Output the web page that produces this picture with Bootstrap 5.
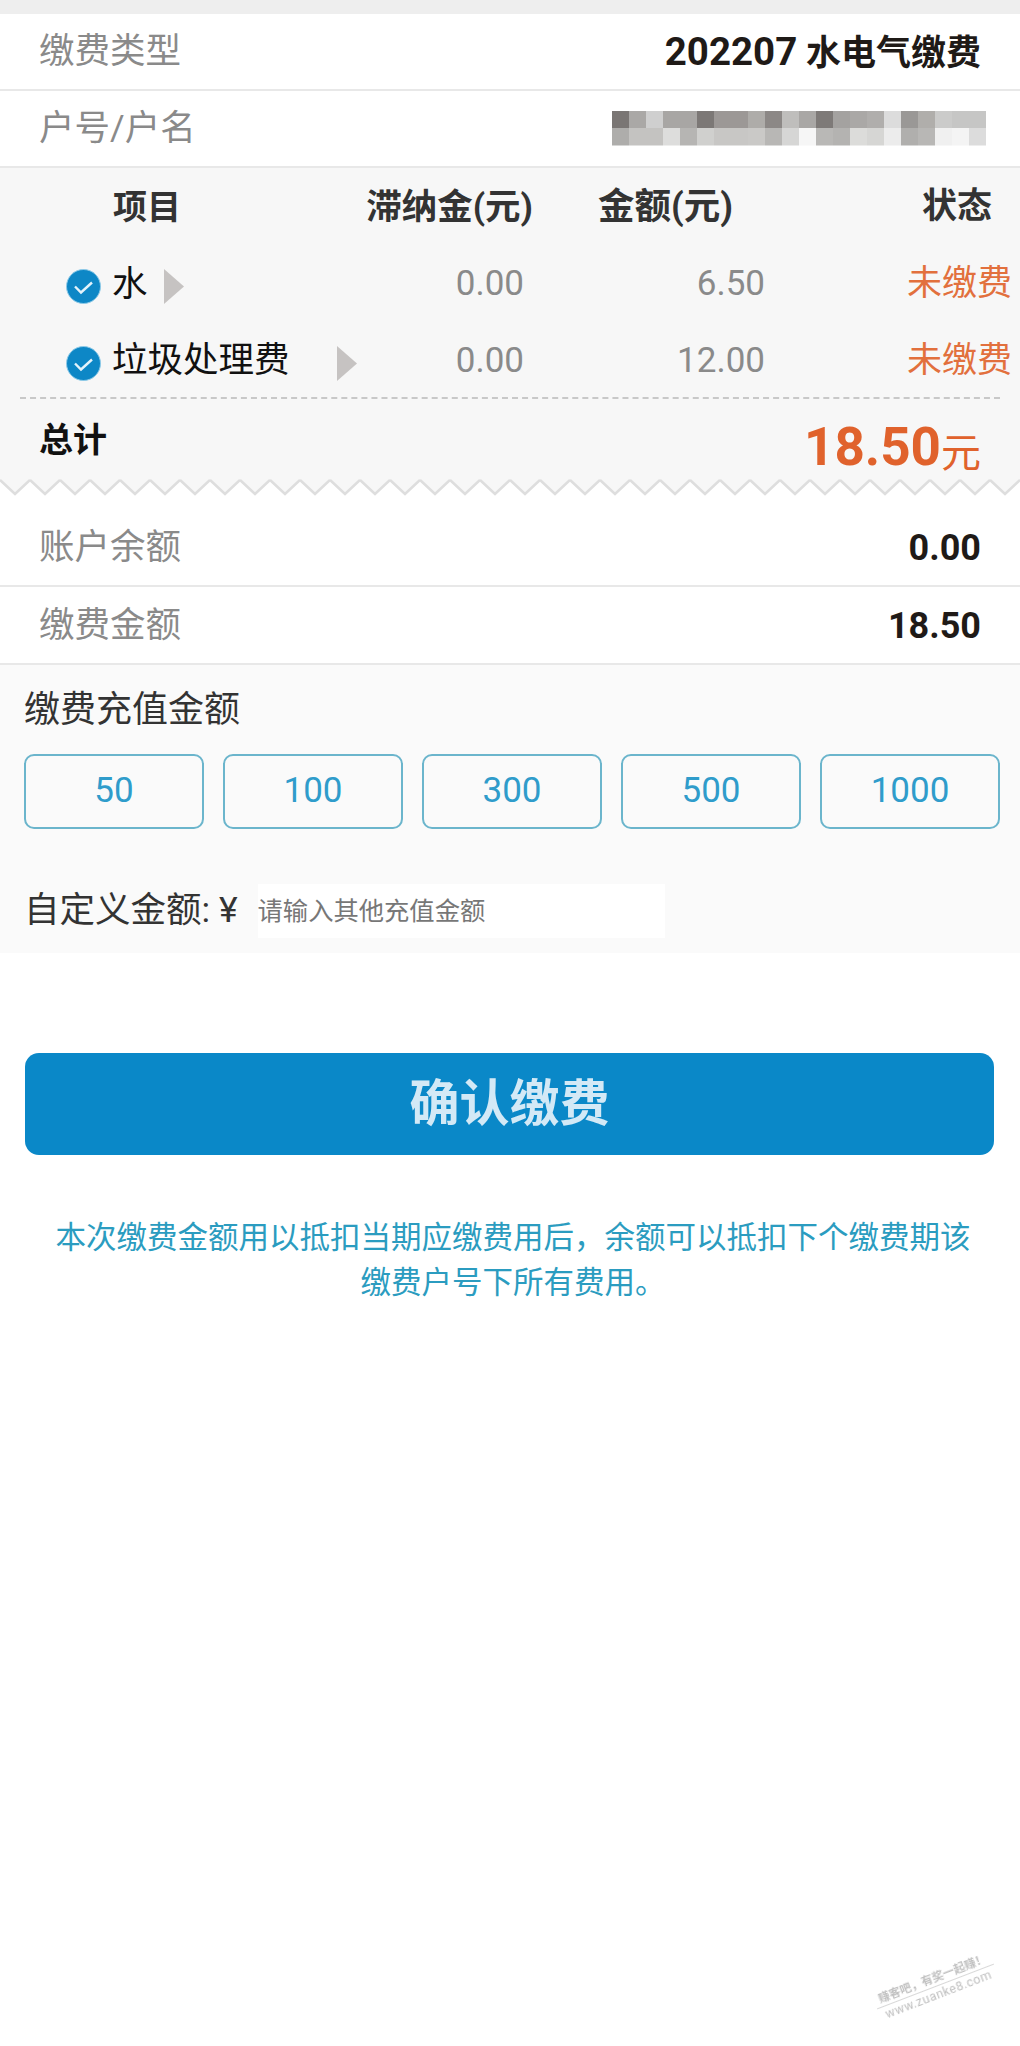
<!DOCTYPE html>
<html lang="zh-CN">
<head>
  <meta charset="UTF-8">
  <meta name="viewport" content="width=device-width, initial-scale=1.0">
  <title>缴费</title>
  <link href="https://cdn.jsdelivr.net/npm/bootstrap@5.3.0/dist/css/bootstrap.min.css" rel="stylesheet">
  <style>
    body {
      font-family: Roboto, "Noto Sans CJK SC", sans-serif;
      background: #fff;
      height: 2046px;
      overflow: hidden;
      position: relative;
    }
    .top-strip { height: 14px; background: #eeeeee; }
    .info-row {
      height: 77px;
      padding: 0 39px;
      font-size: 35.5px;
      border-bottom: 2px solid #e8e8e8;
    }
    .info-label { color: #8a8a8a; }
    .info-value { color: #1f1a17; font-weight: 700; font-size: 35px; }
    .info-digits { font-size: 38.5px; }

    .bill-panel { background: #f7f7f7; height: 311px; }
    .bill-head, .bill-line { display: grid; grid-template-columns: 350px 190px 235px 245px; align-items: center; }
    .bill-head { height: 79px; font-size: 34px; font-weight: 700; color: #333; }
    .bill-line { height: 75px; font-size: 35px; color: #8a8a8a; }
    .bill-line.second { padding-top: 3px; }
    .bill-line .money { font-size: 35px; }
    .head-item { padding-left: 113px; }
    .head-late { text-align: right; padding-right: 7px; font-size: 35.5px; }
    .head-amount { padding-left: 58px; font-size: 36.5px; }
    .head-state { text-align: right; padding-right: 28px; font-size: 35px; }
    .col-late { text-align: right; padding-right: 16px; }
    .col-amount { text-align: right; padding-right: 10px; }
    .col-state { text-align: right; padding-right: 8px; color: #e2703d; }
    .item-cell { padding-left: 66px; color: #111; gap: 11px; font-size: 35.5px; white-space: nowrap; }
    .check-icon { margin-top: 4px; flex: none; }
    .arrow-shape { width: 20px; height: 35px; display: block; flex: none; }
    .arrow-gap { margin-left: 5px; margin-top: 4px; }
    .arrow-gap2 { margin-left: 36px; margin-top: 4px; }
    .dash-line { margin: 0 20px; border-top: 2px dashed #c8c8c8; }
    .total-row { padding: 0 39px; height: 82px; }
    .total-label { font-size: 34px; font-weight: 700; color: #111; }
    .total-sum { margin-top: 14px; }
    .total-num { font-size: 53px; font-weight: 700; color: #e0622c; line-height: 1; }
    .total-unit { font-size: 40px; color: #e0622c; line-height: 1; }
    .zigzag { display: block; width: 1020px; height: 18px; margin-top: -1px; }

    .balance-list { margin-top: 13px; }
    .balance-row { height: 78px; padding: 2px 39px 0; font-size: 35.5px; border-bottom: 2px solid #e8e8e8; }
    .balance-row .info-value { font-size: 36px; }
    .recharge-panel { background: #fafafa; height: 288px; padding: 0 19px 0 24px; }
    .recharge-title { font-size: 36px; color: #333; line-height: 1; padding-top: 27px; }
    .amount-list { margin-top: 26px; gap: 19px; }
    .amount-btn {
      flex: 0 0 180px;
      height: 75px;
      padding: 0;
      background: transparent;
      border: 2px solid #6bb5cc;
      border-radius: 10px;
      color: #2f9ccb;
      font-size: 35px;
    }
    .custom-row { margin-top: 55px; font-size: 35.5px; color: #333; line-height: 1; }
    .custom-input {
      width: 407px;
      height: 54px;
      margin-left: 20px;
      padding: 0;
      border: 0;
      border-radius: 0;
      background: #fff;
      font-size: 25.3px;
      color: #777;
    }
    .custom-input::placeholder { color: #777; opacity: 1; }
    .custom-input:focus { box-shadow: none; background: #fff; }

    .pay-btn {
      display: block;
      width: 969px;
      height: 102px;
      margin: 100px 0 0 25px;
      padding: 0;
      background: #0a88c8;
      border: 0;
      border-radius: 14px;
      color: #d3e9f6;
      font-size: 50px;
      font-weight: 700;
    }
    .pay-note {
      margin: 60px 43px 0 49px;
      text-align: center;
      font-size: 30.5px;
      line-height: 45px;
      color: #2b9cc0;
    }
    .blur-block { display: block; margin-right: -6px; }
    .watermark {
      position: absolute;
      left: 873px;
      top: 1970px;
      width: 125px;
      transform: rotate(-21deg);
      color: #c0c0c0;
      font-size: 12.5px;
      line-height: 16px;
      text-align: center;
      white-space: nowrap;
      filter: blur(0.4px);
    }
    .watermark-top { border-bottom: 1px solid #d8d8d8; font-weight: 700; font-size: 11.5px; }
    .watermark-bottom { letter-spacing: 0.5px; }
  </style>
</head>
<body>
  <div class="top-strip"></div>

  <div class="info-row d-flex justify-content-between align-items-center">
    <span class="info-label">缴费类型</span>
    <span class="info-value"><span class="info-digits">202207</span> 水电气缴费</span>
  </div>
  <div class="info-row d-flex justify-content-between align-items-center">
    <span class="info-label">户号/户名</span>
    <!-- 打码的户名 -->
    <svg class="blur-block" id="blurBlock" width="375" height="35" viewBox="0 0 375 35"></svg>
  </div>

  <div class="bill-panel">
    <div class="bill-head">
      <div class="head-item">项目</div>
      <div class="head-late">滞纳金(元)</div>
      <div class="head-amount">金额(元)</div>
      <div class="head-state">状态</div>
    </div>
    <div class="bill-line">
      <div class="item-cell d-flex align-items-center">
        <svg class="check-icon" width="35" height="35" viewBox="0 0 35 35"><circle cx="17.5" cy="17.5" r="17" fill="#0d87c6" stroke="#8fcbe8" stroke-width="1"/><path d="M9 17.5l6 6 11-10" fill="none" stroke="#e4f3fb" stroke-width="2.4"/></svg>
        <span>水</span>
        <svg class="arrow-shape arrow-gap" viewBox="0 0 20 35"><polygon points="0,0 20,17.5 0,35" fill="#c6c3c2"/></svg>
      </div>
      <div class="col-late money">0.00</div>
      <div class="col-amount money">6.50</div>
      <div class="col-state">未缴费</div>
    </div>
    <div class="bill-line second">
      <div class="item-cell d-flex align-items-center">
        <svg class="check-icon" width="35" height="35" viewBox="0 0 35 35"><circle cx="17.5" cy="17.5" r="17" fill="#0d87c6" stroke="#8fcbe8" stroke-width="1"/><path d="M9 17.5l6 6 11-10" fill="none" stroke="#e4f3fb" stroke-width="2.4"/></svg>
        <span>垃圾处理费</span>
        <svg class="arrow-shape arrow-gap2" viewBox="0 0 20 35"><polygon points="0,0 20,17.5 0,35" fill="#c6c3c2"/></svg>
      </div>
      <div class="col-late money">0.00</div>
      <div class="col-amount money">12.00</div>
      <div class="col-state">未缴费</div>
    </div>
    <div class="dash-line"></div>
    <div class="total-row d-flex justify-content-between align-items-center">
      <span class="total-label">总计</span>
      <span class="total-sum d-flex align-items-end"><span class="total-num">18.50</span><span class="total-unit">元</span></span>
    </div>
  </div>
  <svg class="zigzag" viewBox="0 0 1020 18">
    <defs>
      <pattern id="zigzagTile" width="30" height="18" patternUnits="userSpaceOnUse">
        <polygon points="0,2 15,16 30,2 30,0 0,0" fill="#f7f7f7"/>
        <polyline points="0,2 15,16 30,2" fill="none" stroke="#dedede" stroke-width="2.5"/>
      </pattern>
    </defs>
    <rect width="1020" height="18" fill="url(#zigzagTile)"/>
  </svg>

  <div class="balance-list">
    <div class="balance-row d-flex justify-content-between align-items-center">
      <span class="info-label">账户余额</span>
      <span class="info-value">0.00</span>
    </div>
    <div class="balance-row d-flex justify-content-between align-items-center">
      <span class="info-label">缴费金额</span>
      <span class="info-value">18.50</span>
    </div>
  </div>

  <div class="recharge-panel">
    <div class="recharge-title">缴费充值金额</div>
    <div class="amount-list d-flex">
      <button type="button" class="btn amount-btn">50</button>
      <button type="button" class="btn amount-btn">100</button>
      <button type="button" class="btn amount-btn">300</button>
      <button type="button" class="btn amount-btn">500</button>
      <button type="button" class="btn amount-btn">1000</button>
    </div>
    <div class="custom-row d-flex align-items-center">
      <span>自定义金额: ¥</span>
      <input type="text" class="form-control custom-input" placeholder="请输入其他充值金额">
    </div>
  </div>

  <button type="button" class="btn pay-btn">确认缴费</button>
  <p class="pay-note">本次缴费金额用以抵扣当期应缴费用后，余额可以抵扣下个缴费期该缴费户号下所有费用。</p>

  <div class="watermark">
    <div class="watermark-top">赚客吧，有奖一起赚！</div>
    <div class="watermark-bottom">www.zuanke8.com</div>
  </div>

  <script src="https://cdn.jsdelivr.net/npm/bootstrap@5.3.0/dist/js/bootstrap.bundle.min.js"></script>
  <script>
    // 马赛克格子的颜色，两行
    const blurRows = [
      ['#7a7674','#aaa8a6','#cfcfcf','#a8a6a4','#a8a6a4','#7c7876','#9c9896','#9c9896','#aeaca9','#8c8886','#bfbebc','#a9a7a5','#7e7a78','#a4a2a0','#aaa8a6','#b0aeac','#dcdcdc','#9a9896','#b0aeab','#cbcbca','#c6c6c5','#c6c6c5'],
      ['#aeadab','#c4c3c1','#c4c3c1','#dddddc','#b6b5b3','#d0d0ce','#c8c7c5','#c8c7c5','#cac9c7','#b8b7b5','#d6d6d5','#f6f6f6','#b9b8b6','#b4b3b1','#dcdcda','#d6d6d4','#ececec','#b0afad','#b8b7b5','#f0f0f0','#f4f4f4','#dcdcdc']
    ];
    const blurBlock = document.getElementById('blurBlock');
    let blurHtml = '';
    blurRows.forEach(function(row, y) {
      row.forEach(function(color, x) {
        blurHtml += '<rect x="' + x * 17 + '" y="' + y * 17 + '" width="17" height="17.5" fill="' + color + '"/>';
      });
    });
    blurBlock.innerHTML = blurHtml;
  </script>
</body>
</html>
